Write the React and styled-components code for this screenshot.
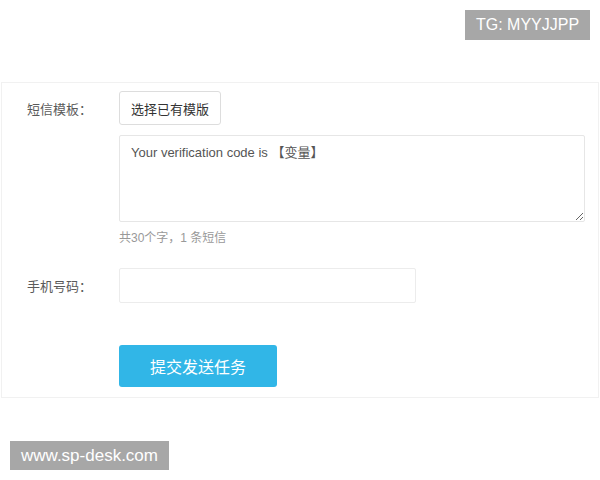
import React from 'react';
import styled, { createGlobalStyle } from 'styled-components';

const GlobalStyle = createGlobalStyle`
  body {
    margin: 0;
    background: #fff;
    font-family: "Liberation Sans", "Noto Sans CJK SC", sans-serif;
  }
`;

const Page = styled.div`
  width: 600px;
  height: 480px;
  display: flex;
  flex-direction: column;
`;

const TopBar = styled.div`
  display: flex;
  justify-content: flex-end;
  padding: 10px 10px 0 0;
`;

const Tag = styled.div`
  background: #a7a7a7;
  color: #fff;
  font-size: ${(p) => p.size || 16}px;
  height: ${(p) => p.h}px;
  width: ${(p) => p.w}px;
  display: flex;
  align-items: center;
  justify-content: center;
`;

const Panel = styled.div`
  margin: 42px 1px 0 1px;
  border: 1px solid #f1f1f1;
  padding: 8px 0 10px 25px;
  display: flex;
  flex-direction: column;
`;

const Row = styled.div`
  display: flex;
  align-items: center;
  margin-top: ${(p) => p.top || 0}px;
`;

const Label = styled.div`
  width: 92px;
  flex-shrink: 0;
  font-size: 13px;
  color: #5a5a5a;
  font-family: "Noto Sans CJK SC", sans-serif;
`;

const Field = styled.div`
  display: flex;
  flex-direction: column;
`;

const PickButton = styled.button`
  width: 102px;
  height: 34px;
  background: #fff;
  border: 1px solid #ddd;
  border-radius: 3px;
  font-size: 13px;
  color: #333;
  font-family: "Noto Sans CJK SC", sans-serif;
  padding: 0;
`;

const TextArea = styled.textarea`
  box-sizing: border-box;
  width: 466px;
  height: 87px;
  margin: 10px 0 0 0;
  border: 1px solid #e6e6e6;
  border-radius: 2px;
  padding: 6px 11px;
  font-size: 13px;
  color: #555;
  font-family: "Liberation Sans", "Noto Sans CJK SC", sans-serif;
  resize: vertical;
  outline: none;
`;

const Hint = styled.div`
  margin-top: 6px;
  font-size: 12px;
  color: #999;
  font-family: "Liberation Sans", "Noto Sans CJK SC", sans-serif;
`;

const Input = styled.input`
  box-sizing: border-box;
  width: 297px;
  height: 35px;
  border: 1px solid #ececec;
  border-radius: 2px;
  outline: none;
`;

const Submit = styled.button`
  margin-left: 92px;
  width: 158px;
  height: 42px;
  background: #31b6e7;
  border: none;
  border-radius: 3px;
  color: #fff;
  font-size: 16px;
  font-family: "Noto Sans CJK SC", sans-serif;
  padding: 0;
`;

const BottomBar = styled.div`
  display: flex;
  padding: 43px 0 0 10px;
`;

export default function App() {
  return (
    <Page>
      <GlobalStyle />
      <TopBar>
        <Tag w={125} h={30}>TG: MYYJJPP</Tag>
      </TopBar>
      <Panel>
        <Row>
          <Label>短信模板：</Label>
          <PickButton>选择已有模版</PickButton>
        </Row>
        <Row>
          <Label />
          <Field>
            <TextArea defaultValue="Your verification code is 【变量】" />
            <Hint>共30个字，1 条短信</Hint>
          </Field>
        </Row>
        <Row top={23}>
          <Label>手机号码：</Label>
          <Input />
        </Row>
        <Row top={42}>
          <Submit>提交发送任务</Submit>
        </Row>
      </Panel>
      <BottomBar>
        <Tag w={159} h={29} size={17}>www.sp-desk.com</Tag>
      </BottomBar>
    </Page>
  );
}
